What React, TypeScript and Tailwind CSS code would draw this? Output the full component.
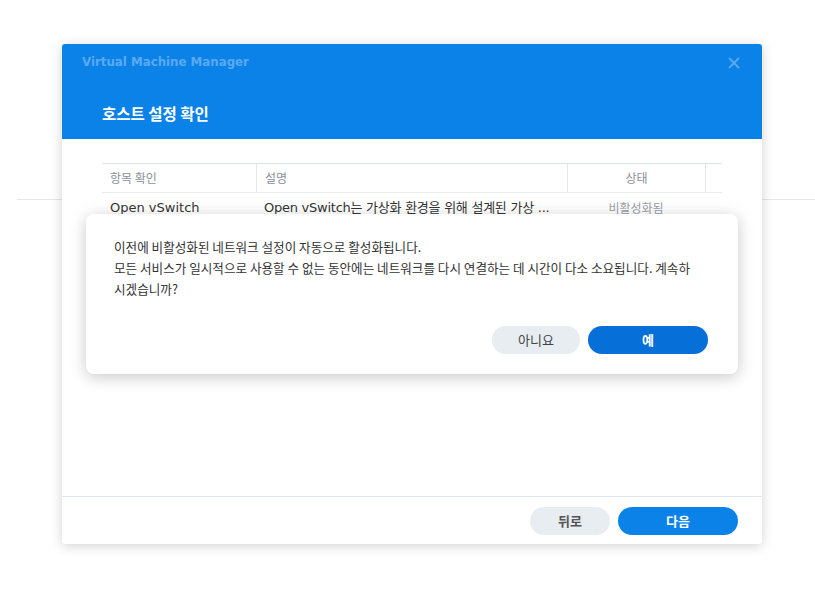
import React from 'react';

const font = { fontFamily: '"DejaVu Sans", "Noto Sans CJK KR", sans-serif' };

const App: React.FC = () => {
  return (
    <div
      className="relative w-[815px] h-[615px] bg-white overflow-hidden text-[#333]"
      style={{ fontFamily: '"Noto Sans CJK KR", "Noto Sans", sans-serif' }}
    >
      {/* desktop line behind the window */}
      <div className="absolute left-[17px] right-0 top-[199px] border-t border-[#e4e8ee]" />

      {/* main window */}
      <div className="absolute left-[62px] top-[44px] w-[700px] h-[500px] bg-white rounded-[3px] shadow-[0_2px_12px_rgba(0,0,0,0.18)] flex flex-col overflow-hidden">
        <div className="h-[95px] bg-[#0b82e8] px-5 pt-[11px] flex flex-col">
          <div className="flex items-center justify-between h-4">
            <span className="text-[11.8px] font-bold text-[#5aaaf2]" style={font}>
              Virtual Machine Manager
            </span>
            <svg width="12" height="12" viewBox="0 0 12 12" className="mr-[2px]">
              <path d="M1.5 1.5 L10.5 10.5 M10.5 1.5 L1.5 10.5" stroke="#5aaaf2" strokeWidth="1.8" strokeLinecap="round" />
            </svg>
          </div>
          <h1 className="mt-[32px] ml-5 text-[15.5px] font-bold text-white leading-5">호스트 설정 확인</h1>
        </div>

        <div className="flex-1 px-10 pt-6">
          <div className="border-t border-[#dfe4ea] text-[12px]">
            <div className="grid grid-cols-[154px_311px_138px_17px] h-[29px] border-b border-[#e8ecf1] text-[#8a9099]">
              <div className="flex items-center pl-2">항목 확인</div>
              <div className="flex items-center pl-2 border-l border-[#e4e8ee]">설명</div>
              <div className="flex items-center justify-center border-l border-[#e4e8ee]">상태</div>
              <div className="border-l border-[#e4e8ee]" />
            </div>
            <div className="grid grid-cols-[154px_311px_138px_17px] h-[30px] text-[13px]">
              <div className="flex items-center pl-2 text-[#333]" style={font}>Open vSwitch</div>
              <div className="flex items-center pl-2 text-[#333] whitespace-nowrap tracking-[-0.25px]" style={font}>
                Open vSwitch는 가상화 환경을 위해 설계된 가상 ...
              </div>
              <div className="flex items-center justify-center text-[12px] text-[#9aa0a8]">비활성화됨</div>
              <div />
            </div>
          </div>
        </div>

        <div className="h-[48px] border-t border-[#dfe6f0] flex items-center justify-end gap-2 pr-6">
          <button className="w-[80px] h-[28px] rounded-full bg-[#e8edf2] text-[13px] font-bold text-[#555]">뒤로</button>
          <button className="w-[120px] h-[28px] rounded-full bg-[#0b82e8] text-[13px] font-bold text-white">다음</button>
        </div>
      </div>

      {/* confirm dialog */}
      <div className="absolute left-[86px] top-[214px] w-[652px] h-[160px] bg-white rounded-[8px] shadow-[0_3px_16px_rgba(0,0,0,0.22)] flex flex-col pl-7 pr-[30px] pt-[22px] pb-5">
        <p className="text-[12.6px] leading-[21px] text-[#333]">
          이전에 비활성화된 네트워크 설정이 자동으로 활성화됩니다.
          <br />
          모든 서비스가 일시적으로 사용할 수 없는 동안에는 네트워크를 다시 연결하는 데 시간이 다소 소요됩니다. 계속하
          <br />
          시겠습니까?
        </p>
        <div className="mt-auto flex justify-end gap-2">
          <button className="w-[88px] h-[28px] rounded-full bg-[#e8edf2] text-[13px] text-[#444]">아니요</button>
          <button className="w-[120px] h-[28px] rounded-full bg-[#0770d8] text-[13px] font-bold text-white">예</button>
        </div>
      </div>
    </div>
  );
};

export default App;
